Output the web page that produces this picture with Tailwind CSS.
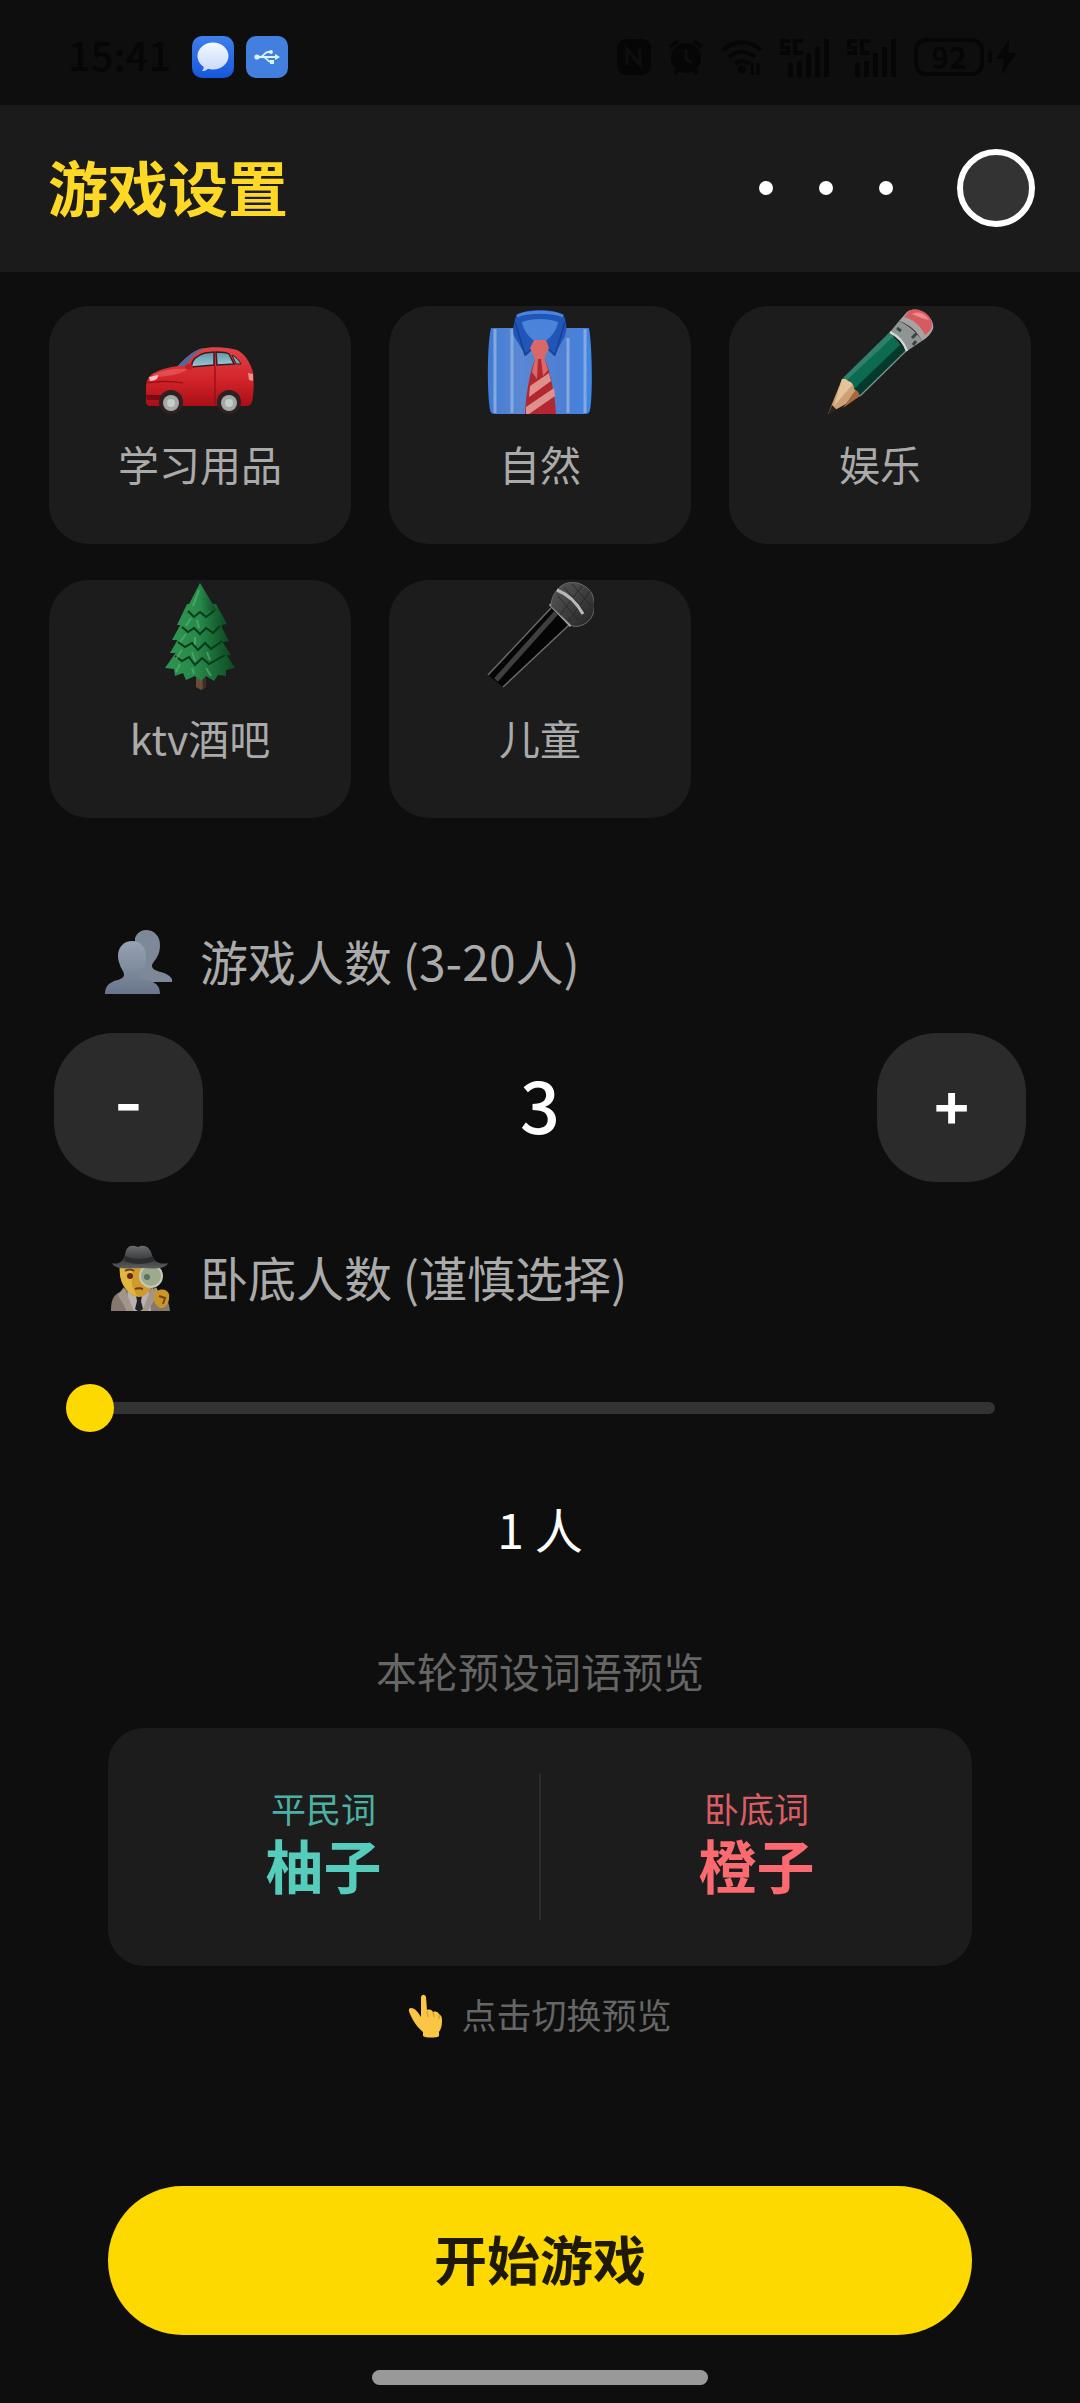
<!DOCTYPE html>
<html lang="zh-CN">
  <head>
    <meta charset="UTF-8" />
    <meta name="viewport" content="width=device-width, initial-scale=1.0" />
    <script src="https://cdn.jsdelivr.net/npm/@tailwindcss/browser@4"></script>
    <title>游戏设置</title>
  </head>
  <body
    class="min-h-screen flex flex-col bg-[#0e0e0e] text-white font-['Noto_Sans_CJK_SC',sans-serif]"
  >
    <!-- status bar -->
    <div class="h-[105px] pt-2 pl-[68px] pr-16 flex items-center justify-between text-[#060606]">
      <div class="flex items-center gap-3">
        <span class="w-28 pb-1.5 text-[40px] leading-[48px] font-medium">15:41</span>
        <svg class="w-[42px] h-[42px]" viewBox="0 0 42 42">
          <defs>
            <linearGradient id="msg" x1="0" y1="0" x2="0" y2="1">
              <stop offset="0" stop-color="#3f80ea" />
              <stop offset="1" stop-color="#1557dc" />
            </linearGradient>
            <linearGradient id="bubble" x1="0" y1="0" x2="0" y2="1">
              <stop offset="0" stop-color="#f4f8ff" />
              <stop offset="1" stop-color="#c9d9f8" />
            </linearGradient>
          </defs>
          <rect width="42" height="42" rx="10" fill="url(#msg)" />
          <path
            d="M21 6.500c8.500 0 15.500 6 15.500 13.500s-7 13.500-15.500 13.500c-2 0-3.500-.3-5-.8-1.500 1.400-3.500 2.300-6 2.300 1.300-1.300 1.800-2.800 1.600-4.300C8 28.500 5.500 24.500 5.500 20 5.500 12.500 12.500 6.500 21 6.500z"
            fill="url(#bubble)"
          />
        </svg>
        <svg class="w-[42px] h-[42px]" viewBox="0 0 42 42">
          <rect width="42" height="42" rx="10" fill="#437fdf" />
          <g fill="none" stroke="#d9f4fb" stroke-width="1.800">
            <path d="M10 21h20M14 21c4 0 4-5 8-5h2M17 21c4 0 4 5 8 5h1" />
          </g>
          <circle cx="11" cy="21" r="2.600" fill="#d9f4fb" />
          <circle cx="25" cy="16" r="1.900" fill="#d9f4fb" />
          <rect x="24" y="24" width="4" height="4" fill="#d9f4fb" />
          <path d="M29 18l5 3-5 3z" fill="#d9f4fb" />
        </svg>
      </div>
      <div class="flex items-center gap-[17px]">
        <svg class="w-[34px] h-[36px]" viewBox="0 0 34 36">
          <rect width="34" height="36" rx="9" fill="currentColor" />
          <path d="M10 26V10l13 16V10" fill="none" stroke="#0e0e0e" stroke-width="3" />
        </svg>
        <svg class="w-[36px] h-[36px]" viewBox="0 0 36 36">
          <circle cx="18" cy="19" r="15" fill="currentColor" />
          <path d="M2 8l8-6M34 8l-8-6M7 35l5-6M29 35l-5-6" stroke="currentColor" stroke-width="4" />
          <path d="M18 10v10l6 4" fill="none" stroke="#0e0e0e" stroke-width="3" />
        </svg>
        <svg class="w-[42px] h-[36px]" viewBox="0 0 42 36">
          <g fill="none" stroke="currentColor" stroke-width="4">
            <path d="M2 11c11-10 27-10 38 0M8 18c8-7 18-7 26 0M14 25c4-4 10-4 14 0" />
            <path d="M31 36V24M37 36V24" stroke-width="3" />
          </g>
          <circle cx="21" cy="31" r="4" fill="currentColor" />
        </svg>
        <svg class="w-[50px] h-[40px]" viewBox="0 0 50 40">
          <path
            d="M0 2h10v4H4v3h6v9H0v-4h6v-2H0zM13 2h10v4h-6v8h6v4H13zM8 26h5v14H8zM17 24h5v16h-5zM26 16h5v24h-5zM35 10h5v30h-5zM44 2h5v38h-5z"
            fill="currentColor"
          />
        </svg>
        <svg class="w-[50px] h-[40px]" viewBox="0 0 50 40">
          <path
            d="M0 2h10v4H4v3h6v9H0v-4h6v-2H0zM13 2h10v4h-6v8h6v4H13zM8 26h5v14H8zM17 24h5v16h-5zM26 16h5v24h-5zM35 10h5v30h-5zM44 2h5v38h-5z"
            fill="currentColor"
          />
        </svg>
        <div class="flex items-center gap-1">
          <span
            class="w-[70px] h-[38px] rounded-xl border-4 border-[#060606] text-[30px] leading-[28px] font-bold text-center"
            >92</span
          >
          <span class="w-1 h-3 rounded-sm bg-[#060606]"></span>
          <svg class="w-[20px] h-[36px]" viewBox="0 0 20 36">
            <path d="M13 0L0 20h8L6 36l14-22h-8z" fill="currentColor" />
          </svg>
        </div>
      </div>
    </div>

    <!-- header -->
    <header class="h-[167px] pb-0.5 pl-12 pr-[45px] flex items-center justify-between bg-[#1b1b1b]">
      <h1 class="pb-1 text-[60px] leading-[72px] font-bold text-[#fdd926]">游戏设置</h1>
      <div class="flex items-center gap-16">
        <button type="button" aria-label="更多" class="flex gap-[46px]">
          <span class="w-3.5 h-3.5 rounded-full bg-white"></span>
          <span class="w-3.5 h-3.5 rounded-full bg-white"></span>
          <span class="w-3.5 h-3.5 rounded-full bg-white"></span>
        </button>
        <button
          type="button"
          aria-label="关闭"
          class="w-[78px] h-[78px] rounded-full border-6 border-white bg-[#333333]"
        ></button>
      </div>
    </header>

    <main class="pt-[34px] pb-8">
      <!-- categories -->
      <div class="px-[49px] grid grid-cols-3 gap-x-[38px] gap-y-9">
        <button type="button" class="pt-0.5 pb-[51px] flex flex-col items-center rounded-[40px] bg-[#1c1c1c]">
          <svg class="w-[108px] h-[108px]" viewBox="1 -3 108 108">
            <defs>
              <linearGradient id="carBody" x1="0" y1="0" x2="0" y2="1">
                <stop offset="0" stop-color="#e04446" />
                <stop offset=".55" stop-color="#d2242a" />
                <stop offset="1" stop-color="#a90f16" />
              </linearGradient>
              <linearGradient id="carGlass" x1="0" y1="0" x2="0" y2="1">
                <stop offset="0" stop-color="#5f96a8" />
                <stop offset="1" stop-color="#9cc9d4" />
              </linearGradient>
            </defs>
            <path
              d="M1 78c0-8 2-13 8-16 7-4 15-6 24-7 7-8 14-14 22-17 11-3 28-2 37 1 8 4 13 12 16 22 1 8 1 22-1 30-1 3-3 4-6 4H6c-4 0-5-2-5-5z"
              fill="url(#carBody)"
            />
            <path d="M33 55c7-8 14-14 22-17l4-1c-8 4-14 10-18 18z" fill="#506a9c" />
            <path d="M46 56c1-7 6-12 14-14l9-1v13z" fill="url(#carGlass)" stroke="#3c1a22" stroke-width="1.500" />
            <path d="M71 41c6 0 10 0 13 2l5 10-17 1z" fill="url(#carGlass)" stroke="#3c1a22" stroke-width="1.500" />
            <path d="M87 44c4 2 7 5 9 9l-5 0z" fill="#76a8b5" stroke="#3c1a22" stroke-width="1" />
            <path d="M70 55v38M2 72c12-2 26-2 36 0" stroke="#8f0d14" stroke-width="1.200" fill="none" />
            <path d="M8 63c12-5 24-6 36-5-8 5-22 8-36 8z" fill="#f0686a" opacity=".55" />
            <path d="M4 66l9-2c1 3-3 6-8 6z" fill="#f5c3bd" />
            <path d="M103 62l5 1v7l-4-1z" fill="#ef8f86" />
            <ellipse cx="44" cy="56" rx="4" ry="3" fill="#c91d24" />
            <path d="M1 84h15v5H2z" fill="#7c0a10" />
            <circle cx="26" cy="91" r="12" fill="#2e2122" />
            <circle cx="26" cy="92" r="8" fill="#a3aaa4" />
            <circle cx="26" cy="92" r="4" fill="#c8cdc7" />
            <circle cx="84" cy="91" r="12" fill="#2e2122" />
            <circle cx="84" cy="92" r="8" fill="#a3aaa4" />
            <circle cx="84" cy="92" r="4" fill="#c8cdc7" />
          </svg>
          <span class="mt-[17px] text-[41px] leading-[60px] text-[#aaaaaa]">学习用品</span>
        </button>

        <button type="button" class="pt-0.5 pb-[51px] flex flex-col items-center rounded-[40px] bg-[#1c1c1c]">
          <svg class="w-[108px] h-[108px]" viewBox="0 0 108 108">
            <defs>
              <linearGradient id="shirt" x1="0" y1="0" x2="1" y2="0">
                <stop offset="0" stop-color="#3f7ad4" />
                <stop offset=".3" stop-color="#5b88d3" />
                <stop offset=".75" stop-color="#4d7ed2" />
                <stop offset="1" stop-color="#3f86e6" />
              </linearGradient>
            </defs>
            <path d="M5 20h98c3 16 4 66 1 82-1 3-2 4-5 4H9c-3 0-4-1-5-4-3-16-3-66 1-82z" fill="url(#shirt)" />
            <path d="M9 21v84M26 21v84M82 30v75M99 21v84" stroke="#85a9df" stroke-width="3" fill="none" />
            <path d="M30 8c8-8 40-8 48 0 3 8 3 14 1 20L68 48 54 34 40 48 28 28c-2-6 0-13 2-20z" fill="#1f56b8" />
            <path d="M36 14c10-4 26-4 36 0-1 8-8 18-18 22-10-4-17-14-18-22z" fill="#4a83d9" />
            <path d="M31 8c10-5 36-5 46 0" fill="none" stroke="#4c84de" stroke-width="3" />
            <path d="M29 14l10 33 13-12M79 14L69 47 56 35" fill="none" stroke="#173f96" stroke-width="1.500" />
            <path d="M48 32h12l3 8-5 11h-9l-5-11z" fill="#d9686a" />
            <path d="M49 51h10c6 16 10 36 11 55H39c1-19 4-39 10-55z" fill="#b22730" />
            <path d="M44 78l19-13 2 8-22 16zM40 99l28-19 1 8-26 18h-3z" fill="#e0908c" />
            <path d="M49 51h3l-1 20-5-7zM55 51l4 0 3 11-5 6z" fill="#d9686a" />
          </svg>
          <span class="mt-[17px] text-[41px] leading-[60px] text-[#aaaaaa]">自然</span>
        </button>

        <button type="button" class="pt-0.5 pb-[51px] flex flex-col items-center rounded-[40px] bg-[#1c1c1c]">
          <svg class="w-[108px] h-[108px]" viewBox="0 0 108 108">
            <path d="M2 106l14-35 7-1 10 9 1 9z" fill="#cfa076" />
            <path d="M16 71l7-1 4 6-19 22z" fill="#e3c29c" />
            <path d="M34 88l-3-8-14 20z" fill="#a8683c" />
            <path d="M2 106l4-9 5 5z" fill="#2c2320" />
            <path d="M16 71L64 24l15 18-45 46c-1-4-3-6-6-7 0-4-2-7-6-8-1-2-3-3-6-2z" fill="#0b6a50" />
            <path d="M16 71L64 24l4 4-47 44c-1-1-3-2-5-1z" fill="#2f7f6a" />
            <path d="M34 88l45-46-4-6-47 45c3 1 5 3 6 7z" fill="#06392d" />
            <path d="M34 88l47-46" stroke="#7f9790" stroke-width="1.200" />
            <path d="M64 24l9-11c8 3 20 13 23 20L81 43c-3-8-9-15-17-19z" fill="#8f9594" />
            <path d="M64 24c8 4 14 11 17 19" fill="none" stroke="#d5dad8" stroke-width="2.500" />
            <path d="M71 20l4 3M86 30l5-5M90 33l-3 4" stroke="#3e4443" stroke-width="3" />
            <path d="M73 13l8-9c8-7 29 4 26 17-2 5-6 9-11 12-4-9-13-17-23-20z" fill="#a7a3a3" />
            <path d="M81 6c4-10 25-3 25 11 0 4-4 8-7 10-4-9-12-16-21-18z" fill="#d65b61" />
            <path d="M86 6c6-4 14 0 17 6-5-1-11-3-17-6z" fill="#ee8a8c" />
          </svg>
          <span class="mt-[17px] text-[41px] leading-[60px] text-[#aaaaaa]">娱乐</span>
        </button>

        <button type="button" class="pt-0.5 pb-[51px] flex flex-col items-center rounded-[40px] bg-[#1c1c1c]">
          <svg class="w-[108px] h-[108px]" viewBox="0 0 108 108">
            <defs>
              <linearGradient id="tree" x1="0" y1="0" x2="1" y2="0">
                <stop offset="0" stop-color="#2f9350" />
                <stop offset=".45" stop-color="#27894a" />
                <stop offset="1" stop-color="#0c4a22" />
              </linearGradient>
            </defs>
            <path d="M50 90h9l1 15-5 3-5-3z" fill="#6b4a38" />
            <path d="M56 90h3l1 15-3 2z" fill="#412a20" />
            <g fill="url(#tree)">
              <path d="M33 66l-14 20 9 1 1 7 8-3 3 7 9-4 6 5 5-5 8 5 4-6 8 1 0-6 9-2-13-20z" />
              <path d="M35 52L24 71l8 0 3 8 7-3 6 7 7-6 6 6 5-6 8 4 2-7 9-1-13-20z" />
              <path d="M37 38L26 58l9 0 3 7 7-3 6 6 6-6 6 6 5-5 7 4 2-7 6-1-10-19z" />
              <path d="M41 22L31 43l7 0 3 7 6-4 5 7 6-7 5 6 5-5 7 3 1-7 5-1-11-20z" />
              <path d="M54 1L40 28l6 0 3 5 5-4 5 5 3-5 9 0z" />
            </g>
            <g stroke="#07391a" stroke-width="2" fill="none">
              <path d="M42 29l6 6 6-5 6 5 8-6M36 45l6 5 6-4 6 6 6-6 7 5 7-7M32 60l7 5 7-4 6 7 7-7 6 6 11-8M29 74l7 5 7-4 6 8 7-7 7 6 16-9" />
            </g>
            <g stroke="#5cb873" stroke-width="2" opacity=".6">
              <path d="M53 8l-6 16M45 36l-5 8M51 38l2 8M40 52l-6 8M49 55l0 8M36 68l-6 9M46 70l3 9M34 82l-4 8M46 86l2 6M60 86l5 8M61 70l3 8" />
            </g>
          </svg>
          <span class="mt-[17px] text-[41px] leading-[60px] text-[#aaaaaa]">ktv酒吧</span>
        </button>

        <button type="button" class="pt-0.5 pb-[51px] flex flex-col items-center rounded-[40px] bg-[#1c1c1c]">
          <svg class="w-[108px] h-[108px]" viewBox="0 0 108 108">
            <defs>
              <linearGradient id="micHead" x1="0" y1="0" x2="1" y2="1">
                <stop offset="0" stop-color="#595959" />
                <stop offset="1" stop-color="#242424" />
              </linearGradient>
            </defs>
            <path d="M65 26l18 17-66 62-15-12z" fill="#050505" />
            <path d="M70 31L10 98" stroke="#3f3f3f" stroke-width="5" />
            <path d="M65 26L2 93M83 43l-66 62" stroke="#6b6b6b" stroke-width="1.500" fill="none" />
            <path d="M64 22l21 22" stroke="#a5a5a5" stroke-width="3" />
            <path d="M65 24c0-8 4-15 10-20 10-7 25-3 31 8 5 12 2 24-6 29-4 3-9 4-14 3z" fill="url(#micHead)" stroke="#6a6a6a" stroke-width="1" />
            <path d="M78 5l22 26M86 2l19 22M72 14l20 24M104 9L82 40M96 4L74 33" stroke="#1c1c1c" stroke-width="1" opacity=".6" />
            <path d="M71 8c10 4 20 13 26 24" fill="none" stroke="#b9b9b9" stroke-width="3" />
          </svg>
          <span class="mt-[17px] text-[41px] leading-[60px] text-[#aaaaaa]">儿童</span>
        </button>
      </div>

      <!-- players -->
      <section class="mt-[110px]">
        <h2 class="pl-[105px] flex items-center gap-[27px] text-[48px] leading-[64px] text-[#aaaaaa]">
          <svg class="w-[68px] h-[68px]" viewBox="0 0 68 68">
            <defs>
              <linearGradient id="people" x1="0" y1="0" x2="0" y2="1">
                <stop offset="0" stop-color="#97a3b4" />
                <stop offset="1" stop-color="#69758a" />
              </linearGradient>
            </defs>
            <path
              d="M41 2c8 0 14 6 14 15 0 5-1 9-3 12-2 4-5 6-5 9 0 4 6 5 12 7 6 3 9 5 8 9H30V10c2-5 6-8 11-8z"
              fill="#7d8899"
            />
            <path
              d="M27 13c8 0 14 6 14 15 0 4 0 6-1 9-2 4-5 6-5 10 0 3 4 5 10 6 7 2 10 6 10 13H0c0-7 3-10 9-13 5-1 10-3 10-6 0-4-3-6-4-10-1-3-2-5-2-9 0-9 6-15 14-15z"
              fill="url(#people)"
            />
          </svg>
          <span class="pb-1">游戏人数 (3-20人)</span>
        </h2>
        <div class="mt-[37px] px-[54px] flex items-center justify-between">
          <button
            id="minus"
            type="button"
            aria-label="减少人数"
            class="w-[149px] h-[149px] pb-2 rounded-[60px] bg-[#2b2b2b] font-['Inter',sans-serif] text-[62px] leading-[72px] font-semibold"
          >
            -
          </button>
          <output id="players" class="pb-2 text-[70px] leading-[84px] font-medium">3</output>
          <button
            id="plus"
            type="button"
            aria-label="增加人数"
            class="w-[149px] h-[149px] pb-2 rounded-[60px] bg-[#2b2b2b] font-['Inter',sans-serif] text-[62px] leading-[72px] font-semibold"
          >
            +
          </button>
        </div>
      </section>

      <!-- undercover -->
      <section class="mt-[62px]">
        <label
          for="spies"
          class="pl-[105px] flex items-center gap-[27px] text-[48px] leading-[64px] text-[#aaaaaa]"
        >
          <svg class="w-[68px] h-[68px]" viewBox="0 0 68 68">
            <defs>
              <linearGradient id="hat" x1="0" y1="0" x2="0" y2="1">
                <stop offset="0" stop-color="#6a6c6d" />
                <stop offset=".6" stop-color="#3a3b3c" />
                <stop offset="1" stop-color="#5c5e5f" />
              </linearGradient>
            </defs>
            <path d="M6 67c0-10 2-15 7-18l9-5h22l10 5c7 3 10 8 11 18z" fill="#85796f" />
            <path d="M23 46l11 8 10-8 2 21H21z" fill="#b9b2b0" />
            <path d="M19 43l-6 8 9 16h7zM47 43l6 7-10 17h-6z" fill="#a2958a" />
            <path d="M31 52h6l-1 5 2 8-4 3-4-3 2-8z" fill="#202024" />
            <path d="M15 20h36c1 12-1 20-5 25-4 5-8 8-12 8s-9-3-13-8c-5-6-7-14-6-25z" fill="#cf9c2b" />
            <path d="M15 22h16c-6 8-6 20 1 30-4-1-8-4-11-7-5-6-7-14-6-23z" fill="#e3b63f" />
            <path d="M20 27c3-2 7-2 9 0M30 45c3-1 5-1 8 0" stroke="#6d3c13" stroke-width="2" fill="none" />
            <circle cx="25" cy="32" r="3" fill="#65261a" />
            <circle cx="46" cy="32" r="11" fill="#9faa8d" stroke="#c4c8be" stroke-width="2" />
            <circle cx="42" cy="33" r="3" fill="#586f66" />
            <path d="M50 44l4 9" stroke="#b09a63" stroke-width="3" />
            <path d="M49 51c2-6 12-8 15-1 1 7-2 14-8 14-5-1-8-7-7-13z" fill="#c99729" />
            <path d="M54 52l6 2-2 6" fill="none" stroke="#74460f" stroke-width="2" />
            <path d="M7 19c6 2 11-1 13-8 1-9 6-11 13-8 6-3 12 0 14 8 2 7 8 10 16 8-2 6-13 6-28 5-14 1-26 1-28-5z" fill="url(#hat)" />
            <path d="M20 12c9 4 19 4 28 0l1 5c-9 4-21 4-30 0z" fill="#2b2c2d" />
          </svg>
          <span class="pb-1">卧底人数 (谨慎选择)</span>
        </label>
        <div class="mt-[72px] pl-[66px] pr-[85px] h-12 flex items-center">
          <input
            id="spies"
            type="range"
            min="1"
            max="5"
            value="1"
            class="w-full h-[12px] appearance-none rounded-full bg-[#333333] outline-none [&::-webkit-slider-thumb]:appearance-none [&::-webkit-slider-thumb]:w-12 [&::-webkit-slider-thumb]:h-12 [&::-webkit-slider-thumb]:rounded-full [&::-webkit-slider-thumb]:bg-[#fdd900]"
          />
        </div>
        <p class="mt-[62px] text-[48px] leading-[68px] text-center"><span id="spyCount">1</span> 人</p>
      </section>

      <!-- word preview -->
      <section class="mt-[78px] px-[108px] text-center">
        <h2 class="text-[41px] leading-[60px] text-[#666666]">本轮预设词语预览</h2>
        <button
          id="preview"
          type="button"
          class="mt-[28px] w-full py-[46px] flex rounded-[36px] bg-[#1c1c1c]"
        >
          <span class="flex-1 h-[146px] pt-2 flex flex-col border-r-2 border-[#2b2b2b] text-[#55ccbc]">
            <span class="text-[35px] leading-[52px] opacity-85">平民词</span>
            <b id="civil" class="text-[58px] leading-[60px]">柚子</b>
          </span>
          <span class="flex-1 h-[146px] pt-2 flex flex-col text-[#fb6a70]">
            <span class="text-[35px] leading-[52px] opacity-85">卧底词</span>
            <b id="spy" class="text-[58px] leading-[60px]">橙子</b>
          </span>
        </button>
        <p class="mt-[24px] flex items-center justify-center gap-[19px] text-[35px] leading-[48px] text-[#666666]">
          <svg class="w-[34px] h-[44px]" viewBox="0 0 34 44">
            <path
              d="M13 3c1-3 4-3 5 0l1 13c3-1 5 0 6 2 3-1 5 0 6 2 2 1 3 3 3 6 0 6-1 9-3 12v4c-1 2-14 2-16 0v-4C10 34 5 27 2 20c-2-4-1-6 1-6 4 0 7 4 10 9z"
              fill="#fbc546"
            />
            <path d="M19 17l1 6M25 18l1 5M31 21v4" stroke="#e0a032" stroke-width="1.500" fill="none" />
          </svg>
          <span class="pb-1">点击切换预览</span>
        </p>
      </section>

      <div class="mt-[144px] px-[108px]">
        <button
          type="button"
          class="w-full h-[149px] pb-1.5 rounded-full bg-[#fdd900] text-[53px] leading-[72px] font-bold text-[#1f1a08]"
        >
          开始游戏
        </button>
      </div>
    </main>

    <!-- home indicator -->
    <div class="mt-auto mb-[18px] mx-auto w-[336px] h-[15px] rounded-full bg-[#999999]"></div>

    <script>
      const players = document.getElementById("players");
      const spies = document.getElementById("spies");

      function step(n) {
        const next = Number(players.textContent) + n;
        if (next >= 3 && next <= 20) {
          players.textContent = next;
        }
      }

      document.getElementById("minus").onclick = () => step(-1);
      document.getElementById("plus").onclick = () => step(1);

      spies.oninput = () => {
        document.getElementById("spyCount").textContent = spies.value;
      };

      // swap the two words
      document.getElementById("preview").onclick = () => {
        const civil = document.getElementById("civil");
        const spy = document.getElementById("spy");
        [civil.textContent, spy.textContent] = [spy.textContent, civil.textContent];
      };
    </script>
  </body>
</html>
